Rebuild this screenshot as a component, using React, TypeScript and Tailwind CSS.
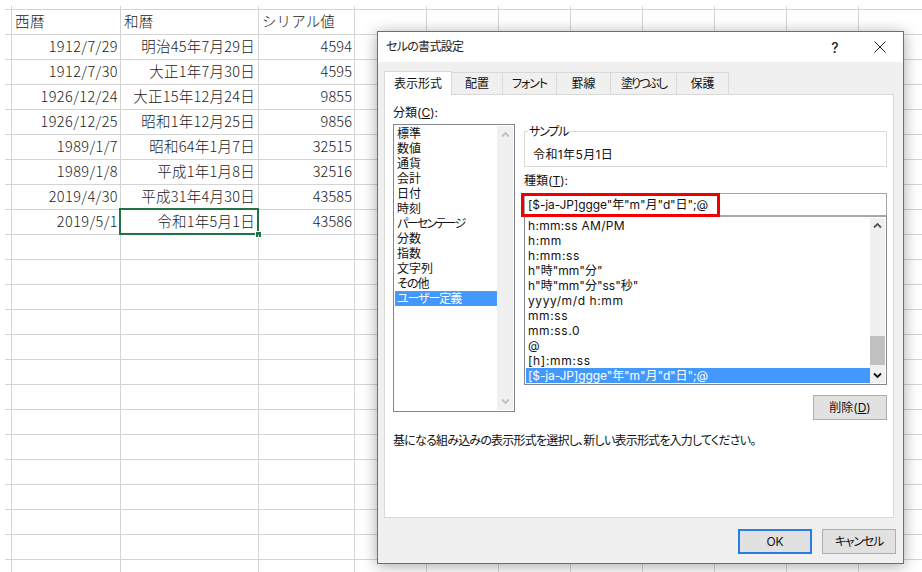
import React from "react";

const rows = [
  ["西暦", "和暦", "シリアル値"],
  ["1912/7/29", "明治45年7月29日", "4594"],
  ["1912/7/30", "大正1年7月30日", "4595"],
  ["1926/12/24", "大正15年12月24日", "9855"],
  ["1926/12/25", "昭和1年12月25日", "9856"],
  ["1989/1/7", "昭和64年1月7日", "32515"],
  ["1989/1/8", "平成1年1月8日", "32516"],
  ["2019/4/30", "平成31年4月30日", "43585"],
  ["2019/5/1", "令和1年5月1日", "43586"],
];

// kana in the original font is much narrower, so those lines get their own tracking
const categories = [
  ["標準", ""],
  ["数値", ""],
  ["通貨", ""],
  ["会計", ""],
  ["日付", ""],
  ["時刻", ""],
  ["パーセンテージ", "tracking-[-1.7px]"],
  ["分数", ""],
  ["指数", ""],
  ["文字列", ""],
  ["その他", "tracking-[-1px]"],
  ["ユーザー定義", "tracking-[-1.1px]"],
];

const formats = [
  ["h:mm:ss AM/PM", "tracking-[0.3px]"],
  ["h:mm", "tracking-[0.6px]"],
  ["h:mm:ss", "tracking-[0.6px]"],
  ['h"時"mm"分"', ""],
  ['h"時"mm"分"ss"秒"', ""],
  ["yyyy/m/d h:mm", "tracking-[0.6px]"],
  ["mm:ss", "tracking-[0.6px]"],
  ["mm:ss.0", "tracking-[0.6px]"],
  ["@", ""],
  ["[h]:mm:ss", "tracking-[0.7px]"],
];

const fmt = '[$-ja-JP]ggge"年"m"月"d"日";@';
const tabs = [
  ["配置", "w-[51px]", ""],
  ["フォント", "w-[54px]", "tracking-[-1px]"],
  ["罫線", "w-[54px]", ""],
  ["塗りつぶし", "w-[66px]", "tracking-[-2px]"],
  ["保護", "w-[52px]", ""],
];

function Chevron({ up, color }: { up?: boolean; color: string }) {
  return (
    <svg width="9" height="7" viewBox="0 0 9 7" fill="none">
      <path d={up ? "M1 5.5 4.5 2 8 5.5" : "M1 1.5 4.5 5 8 1.5"} stroke={color} strokeWidth="1.8" />
    </svg>
  );
}

function Columns({ className = "" }: { className?: string }) {
  return (
    <>
      {Array.from({ length: 7 }).map((_, i) => (
        <div key={i} className={`w-[72px] border-r border-[#d4d4d4] ${className}`} />
      ))}
    </>
  );
}

function Sheet() {
  const extra = Array.from({ length: 14 });
  return (
    <div className="pt-[6px] pl-[5px] h-[572px] overflow-hidden">
      {/* stubs of the column lines above the first row */}
      <div className="flex h-[3px] w-[917px]">
        <div className="w-[7px] border-r border-[#d4d4d4]" />
        <div className="w-[109px] border-r border-[#d4d4d4]" />
        <div className="w-[138px] border-r border-[#d4d4d4]" />
        <div className="w-[96px] border-r border-[#d4d4d4]" />
        <Columns />
      </div>
      <div className="border-t border-[#d4d4d4] w-[917px]">
        {rows.map((r, i) => (
          <Row key={i} cells={r} index={i} />
        ))}
        {extra.map((_, i) => (
          <Row key={i} cells={["", "", ""]} index={100} />
        ))}
      </div>
    </div>
  );
}

function Row({ cells, index }: { cells: string[]; index: number }) {
  const head = index === 0;
  const align = head ? "justify-start pl-[3px]" : "justify-end pr-[2px]";
  return (
    <div className="flex h-[25px] border-b border-[#d4d4d4] text-[14.5px] text-[#222] font-light">
      <div className="w-[7px] border-r border-[#d4d4d4]" />
      <div className={`w-[109px] flex items-center pb-[2px] tracking-[0.4px] border-r border-[#d4d4d4] ${align}`}>{cells[0]}</div>
      <div className={`w-[138px] flex items-center pb-[2px] tracking-[0.25px] border-r border-[#d4d4d4] relative ${head ? "justify-start pl-[3px]" : "justify-end pr-[3px]"}`}>
        {cells[1]}
        {index === 8 && (
          <div className="absolute left-[-2px] top-[-2px] w-[140px] h-[27px] border-2 border-[#217346]">
            <div className="absolute right-[-5px] bottom-[-5px] w-[7px] h-[7px] bg-[#217346] border border-white" />
          </div>
        )}
      </div>
      <div className={`w-[96px] flex items-center pb-[2px] tracking-[0.1px] border-r border-[#d4d4d4] ${align}`}>{cells[2]}</div>
      <Columns />
    </div>
  );
}

function Button({ children, active, className = "" }: { children: React.ReactNode; active?: boolean; className?: string }) {
  return (
    <button
      className={`w-[74px] h-[25px] bg-[#e1e1e1] flex items-center justify-center text-[12px] text-[#111] ${
        active ? "border-2 border-[#2a7cde]" : "border border-[#adadad]"
      } ${className}`}
    >
      {children}
    </button>
  );
}

function FormatDialog() {
  return (
    <div className="absolute left-[377px] top-[31px] w-[527px] h-[533px] border border-[#6f6f6f] bg-[#f0f0f0] flex flex-col shadow-[0_2px_14px_rgba(0,0,0,0.35)] text-[12px] text-[#111] font-['Inter','Noto_Sans_CJK_JP',sans-serif] [font-feature-settings:'palt']">
      <div className="h-[30px] bg-white flex items-center pl-[8px] shrink-0">
        <span className="flex-1 text-[#222] tracking-[-0.7px]">セルの書式設定</span>
        <span className="text-[14px] w-[12px] text-center mr-[33px] font-medium text-[#222]">?</span>
        <svg width="12" height="12" viewBox="0 0 12 12" className="mr-[17px]">
          <path d="M.5.5l11 11M11.5.5l-11 11" stroke="#222" strokeWidth="1" fill="none" />
        </svg>
      </div>

      <div className="pl-[6px] pt-[8px] flex flex-col flex-1">
        <div className="flex items-end h-[24px]">
          <div className="w-[68px] h-[24px] bg-white border border-b-0 border-[#d9d9d9] flex items-center justify-center relative z-10 mb-[-1px]">
            表示形式
          </div>
          {tabs.map(([label, w, track]) => (
            <div key={label} className={`${w} ${track} h-[22px] border border-l-0 border-b-0 border-[#d9d9d9] flex items-center justify-center`}>
              {label}
            </div>
          ))}
        </div>

        <div className="w-[510px] h-[424px] bg-white border border-[#d9d9d9] pl-[8px] pr-[6px] pt-[10px]">
          <div className="flex">
            <div className="w-[122px] shrink-0">
              <div className="h-[19px] leading-[16px]">
                分類(<span className="underline">C</span>):
              </div>
              <div className="h-[288px] border border-[#828790] flex">
                <div className="flex-1 pl-[1px] pt-[1px]">
                  {categories.map(([c, track], i) => (
                    <div
                      key={c}
                      className={`h-[15px] leading-[15px] pl-[2px] ${track} ${
                        i === 11 ? "bg-[#4299fb] text-white outline-1 outline-dotted outline-offset-[-1px] outline-[#c98a3a]" : ""
                      }`}
                    >
                      {c}
                    </div>
                  ))}
                </div>
                <div className="w-[16px] bg-[#f0f0f0] my-[1px] mr-[1px] flex flex-col items-center justify-between py-[5px]">
                  <Chevron up color="#c0c0c0" />
                  <Chevron color="#c0c0c0" />
                </div>
              </div>
            </div>

            <div className="w-[363px] ml-[9px] flex flex-col">
              <div className="relative mt-[26px] h-[36px] border border-[#d9d9d9] flex items-center pl-[8px] pt-[11px] tracking-[0.4px]">
                <span className="absolute left-[3px] top-[-8px] bg-white px-[1px] leading-[16px] tracking-[-1.2px]">サンプル</span>
                令和1年5月1日
              </div>
              <div className="h-[26px] pt-[6px] leading-[16px]">
                種類(<span className="underline">T</span>):
              </div>
              <div className="relative h-[23px] border border-[#a6a6a6] flex items-center pl-[3px] tracking-[-0.1px]">
                {fmt}
                <div className="absolute left-[-4px] top-[-1px] w-[199px] h-[24px] border-[3px] border-[#f00000]" />
              </div>
              <div className="h-[169px] border border-[#828790] border-t-[#a6a6a6] flex">
                <div className="flex-1 pt-[1px] pl-[1px] flex flex-col">
                  {formats.map(([f, track]) => (
                    <div key={f} className={`h-[15px] leading-[15px] pl-[2px] ${track}`}>
                      {f}
                    </div>
                  ))}
                  <div className="h-[15px] leading-[15px] pl-[2px] bg-[#4299fb] text-white tracking-[-0.1px]">{fmt}</div>
                </div>
                <div className="w-[15px] bg-[#f0f0f0] my-[1px] mr-[1px] flex flex-col items-center py-[4px]">
                  <Chevron up color="#555" />
                  <div className="w-[15px] h-[29px] bg-[#c0c0c0] mt-[107px]" />
                  <div className="mt-auto">
                    <Chevron color="#111" />
                  </div>
                </div>
              </div>
              <Button className="self-end mt-[10px]">
                削除(<span className="underline">D</span>)
              </Button>
            </div>
          </div>
          <p className="mt-[13px] leading-[16px] tracking-[-0.78px]">基になる組み込みの表示形式を選択し、新しい表示形式を入力してください。</p>
        </div>

        <div className="flex justify-end gap-[10px] pr-[7px] pt-[11px]">
          <Button active>OK</Button>
          <Button className="tracking-[-1.2px]">キャンセル</Button>
        </div>
      </div>
    </div>
  );
}

export default function App() {
  return (
    <div className="relative w-[922px] h-[572px] bg-white overflow-hidden font-['Noto_Sans_CJK_JP',sans-serif]">
      <Sheet />
      <FormatDialog />
    </div>
  );
}
